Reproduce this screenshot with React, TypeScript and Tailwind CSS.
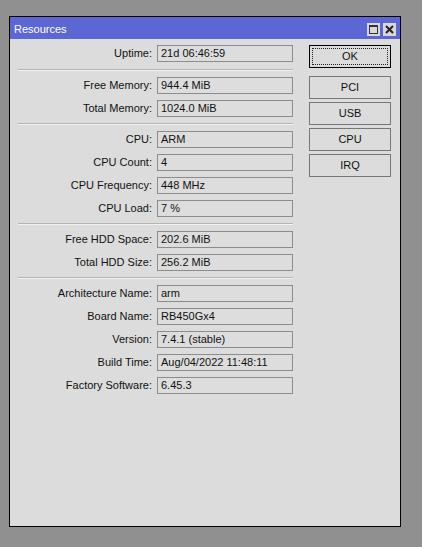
import React from "react";

type Row = { label: string; value: string };

const groups: Row[][] = [
  [{ label: "Uptime:", value: "21d 06:46:59" }],
  [
    { label: "Free Memory:", value: "944.4 MiB" },
    { label: "Total Memory:", value: "1024.0 MiB" },
  ],
  [
    { label: "CPU:", value: "ARM" },
    { label: "CPU Count:", value: "4" },
    { label: "CPU Frequency:", value: "448 MHz" },
    { label: "CPU Load:", value: "7 %" },
  ],
  [
    { label: "Free HDD Space:", value: "202.6 MiB" },
    { label: "Total HDD Size:", value: "256.2 MiB" },
  ],
  [
    { label: "Architecture Name:", value: "arm" },
    { label: "Board Name:", value: "RB450Gx4" },
    { label: "Version:", value: "7.4.1 (stable)" },
    { label: "Build Time:", value: "Aug/04/2022 11:48:11" },
    { label: "Factory Software:", value: "6.45.3" },
  ],
];

const font = { fontFamily: '"Liberation Sans", Arial, sans-serif' };

function Field({ label, value }: Row) {
  return (
    <div className="flex h-[17px] items-center">
      <div className="flex-1 pr-[5px] text-right text-[11px] leading-none text-[#111]">
        {label}
      </div>
      <div className="flex h-[17px] w-[136px] items-center border border-[#8c8c8c] bg-[#dddddd] pl-[3px] text-[11px] leading-none text-[#111]">
        {value}
      </div>
    </div>
  );
}

function Separator({ top }: { top: number }) {
  return (
    <div
      className={
        (top === 7 ? "mt-[7px]" : "mt-[6px]") +
        " mb-[6px] h-[2px] border-t border-b border-t-[#b4b4b4] border-b-[#f2f2f2]"
      }
    />
  );
}

function Button({ label, focused }: { label: string; focused?: boolean }) {
  if (focused) {
    return (
      <div className="flex h-[23px] w-[82px] items-center justify-center border border-black bg-[#dcdcdc] p-[2px]">
        <div className="flex h-full w-full items-center justify-center border border-dotted border-[#222] text-[11px] leading-none text-[#111]">
          {label}
        </div>
      </div>
    );
  }
  return (
    <div className="flex h-[23px] w-[82px] items-center justify-center border border-[#777] bg-[#dcdcdc] text-[11px] leading-none text-[#111]">
      {label}
    </div>
  );
}

export default function App() {
  return (
    <div className="h-[547px] w-[422px] bg-[#909090] pl-[9px] pt-[16px]" style={font}>
      <div className="flex h-[511px] w-[392px] flex-col border border-black bg-[#dcdcdc]">
        {/* title bar */}
        <div className="flex h-[22px] items-center bg-[#5c67d4] pl-[4px] pr-[4px] pt-[2px]">
          <span className="flex-1 text-[11px] leading-none text-white">Resources</span>
          <div className="flex gap-[3px]">
            <div className="flex h-[13px] w-[13px] items-center justify-center bg-[#d8d8d8]">
              <div className="h-[9px] w-[9px] border border-[#333] border-t-2" />
            </div>
            <div className="flex h-[13px] w-[13px] items-center justify-center bg-[#d8d8d8]">
              <svg width="9" height="9" viewBox="0 0 9 9">
                <path d="M1 1 L8 8 M8 1 L1 8" stroke="#222" strokeWidth="2" />
              </svg>
            </div>
          </div>
        </div>

        {/* body */}
        <div className="flex pl-[8px] pt-[6px]">
          <div className="flex w-[275px] flex-col">
            {groups.map((g, gi) => (
              <React.Fragment key={gi}>
                {gi > 0 && <Separator top={gi === 1 ? 7 : 6} />}
                <div className="flex flex-col gap-[6px]">
                  {g.map((r) => (
                    <Field key={r.label} {...r} />
                  ))}
                </div>
              </React.Fragment>
            ))}
          </div>
          <div className="ml-[16px] flex flex-col">
            <Button label="OK" focused />
            <div className="mt-[8px] flex flex-col gap-[3px]">
              <Button label="PCI" />
              <Button label="USB" />
              <Button label="CPU" />
              <Button label="IRQ" />
            </div>
          </div>
        </div>
      </div>
    </div>
  );
}
